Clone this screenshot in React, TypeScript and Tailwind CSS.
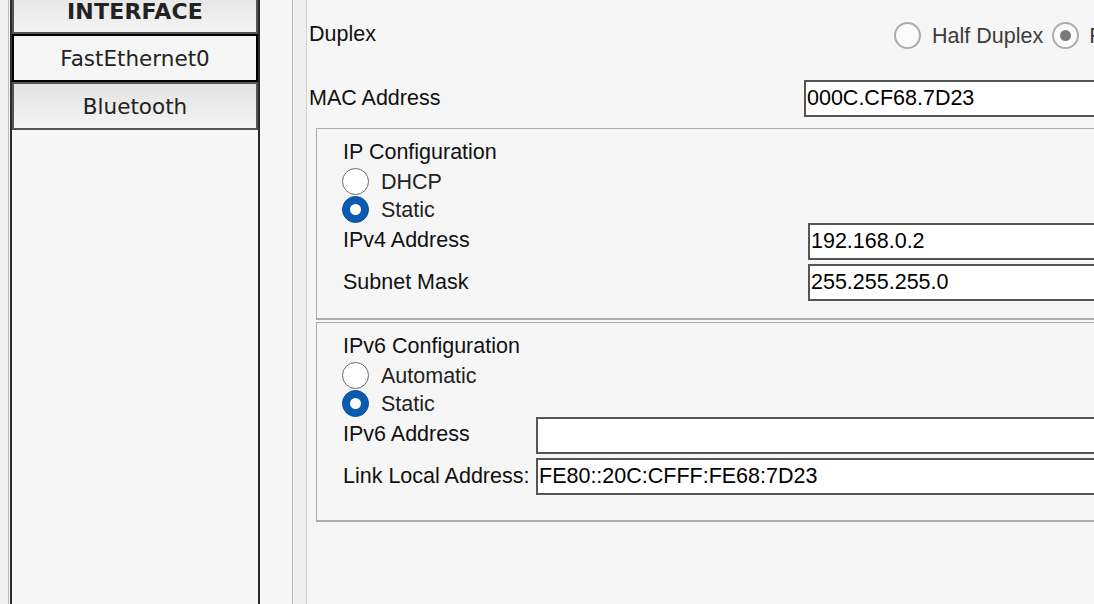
import React from "react";

const sans = { fontFamily: '"Liberation Sans", Arial, Helvetica, sans-serif' };

function Radio({ checked }: { checked?: boolean }) {
  if (checked) {
    return (
      <div className="w-[27px] h-[27px] shrink-0 rounded-full bg-[#0b5cb0] border border-[#084a94] flex items-center justify-center">
        <div className="w-[11px] h-[11px] rounded-full bg-white" />
      </div>
    );
  }
  return <div className="w-[27px] h-[27px] shrink-0 rounded-full bg-white border-[1.5px] border-[#6b6b6b]" />;
}

function DisabledRadio({ checked }: { checked?: boolean }) {
  return (
    <div className="w-[27px] h-[27px] shrink-0 rounded-full bg-[#fbfbfb] border-2 border-[#ababab] flex items-center justify-center">
      {checked && <div className="w-[11px] h-[11px] rounded-full bg-[#7a7a7a]" />}
    </div>
  );
}

function Field({ value, className = "" }: { value?: string; className?: string }) {
  return (
    <div className={"h-[37px] flex-1 bg-white border-2 border-[#555] flex items-center pl-[1px] pb-[2px] text-black " + className}>
      {value}
    </div>
  );
}

function RadioRow({ label, checked }: { label: string; checked?: boolean }) {
  return (
    <div className="h-[28px] flex items-center -ml-[1px]">
      <Radio checked={checked} />
      <span className="ml-[12px] text-[#222] pt-[1px]">{label}</span>
    </div>
  );
}

export default function App() {
  return (
    <div
      className="w-[1094px] h-[604px] overflow-hidden flex bg-[#f6f6f6] text-[21.5px] leading-[24px]"
      style={sans}
    >
      {/* outer left strip */}
      <div className="w-[9px] shrink-0 bg-[#f0f0f0] border-r border-[#bbbbbb]" />
      {/* interface list */}
      <div
        className="ml-[1px] w-[250px] h-[620px] -mt-[14px] shrink-0 flex flex-col border-x-2 border-[#2b2b2b] bg-[#f6f6f6] text-[#222]"
        style={{ fontFamily: '"DejaVu Sans", Verdana, sans-serif' }}
      >
        <div className="h-[48px] shrink-0 flex items-center justify-center pt-[3px] border-2 border-[#555] bg-linear-to-b from-[#e3e3e3] to-[#f4f4f4] font-bold text-[22px] tracking-[0.2px]">
          INTERFACE
        </div>
        <div className="h-[48px] shrink-0 flex items-center justify-center pt-[1px] border-2 border-black bg-[#f6f6f6] text-[21.5px]">
          FastEthernet0
        </div>
        <div className="h-[48px] shrink-0 flex items-center justify-center pt-[1px] border-2 border-[#555] bg-linear-to-b from-[#e3e3e3] to-[#f4f4f4] text-[21.5px]">
          Bluetooth
        </div>
      </div>
      {/* gap + splitter */}
      <div className="w-[32px] shrink-0" />
      <div className="w-[15px] shrink-0 bg-[#efefef] border-l border-r border-l-[#b9b9b9] border-r-[#d2d2d2]" />

      {/* main panel */}
      <div className="w-[900px] shrink-0 flex flex-col pl-[2px] text-[#111]">
        {/* Duplex */}
        <div className="h-[64px] flex items-center">
          <div className="w-[585px] shrink-0 pt-[3px]">Duplex</div>
          <div className="flex items-center pt-[7px] text-[#3c3c3c]">
            <DisabledRadio />
            <span className="ml-[11px] pt-[1px]">Half Duplex</span>
            <div className="ml-[9px]">
              <DisabledRadio checked />
            </div>
            <span className="ml-[10px] pt-[1px] whitespace-nowrap">Full Duplex</span>
          </div>
        </div>
        {/* MAC */}
        <div className="h-[64px] flex items-start pt-[16px]">
          <div className="w-[495px] shrink-0 mt-[6px]">MAC Address</div>
          <Field value="000C.CF68.7D23" />
        </div>

        {/* IP configuration box */}
        <div className="ml-[7px] h-[192px] border border-b-2 border-[#acacac] pl-[26px] pt-[11px] flex flex-col">
          <div>IP Configuration</div>
          <div className="mt-[3px]">
            <RadioRow label="DHCP" />
            <RadioRow label="Static" checked />
          </div>
          <div className="flex items-start">
            <div className="w-[465px] shrink-0 mt-[5px]">IPv4 Address</div>
            <Field value="192.168.0.2" />
          </div>
          <div className="flex items-start mt-[4px]">
            <div className="w-[465px] shrink-0 mt-[6px]">Subnet Mask</div>
            <Field value="255.255.255.0" />
          </div>
        </div>

        {/* IPv6 configuration box */}
        <div className="ml-[7px] mt-[2px] h-[200px] border border-b-2 border-[#acacac] pl-[26px] pt-[11px] flex flex-col">
          <div>IPv6 Configuration</div>
          <div className="mt-[3px]">
            <RadioRow label="Automatic" />
            <RadioRow label="Static" checked />
          </div>
          <div className="flex items-start">
            <div className="w-[193px] shrink-0 mt-[5px]">IPv6 Address</div>
            <Field />
          </div>
          <div className="flex items-start mt-[4px]">
            <div className="w-[193px] shrink-0 mt-[6px] whitespace-nowrap">Link Local Address:</div>
            <Field value="FE80::20C:CFFF:FE68:7D23" />
          </div>
        </div>
      </div>
    </div>
  );
}
